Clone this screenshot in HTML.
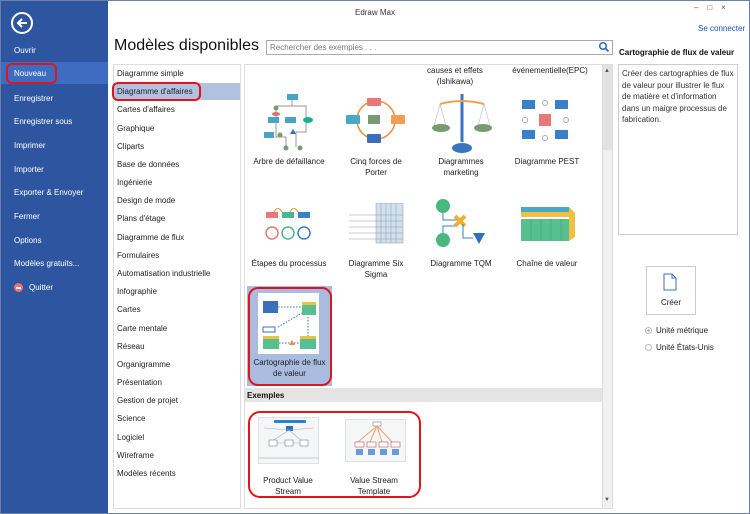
<!DOCTYPE html>
<html><head><meta charset="utf-8"><style>
*{margin:0;padding:0;box-sizing:border-box}
body{width:750px;height:514px;background:#fff;font-family:"Liberation Sans",sans-serif;font-size:8px;color:#222;position:relative;overflow:hidden}
.a{position:absolute}
#frame{left:0;top:0;width:750px;height:514px;border:1px solid #6b7fa8}
#side{left:1px;top:1px;width:107px;height:512px;background:#2e56a0}
.si{position:absolute;left:14px;color:#fff;font-size:8px}
.cat{position:absolute;left:117px;font-size:8px;color:#222}
.lbl{position:absolute;text-align:center;font-size:8px;color:#222;line-height:11px}
.red{position:absolute;border:2px solid #e0141c;border-radius:6px}
</style></head><body>
<div class="a" id="side"></div>
<div class="a" style="left:11px;top:12px;width:22px;height:22px;border:2px solid #fff;border-radius:50%"></div>
<svg class="a" style="left:15px;top:16px" width="14" height="14"><path d="M12 7H3M7 3L3 7L7 11" stroke="#fff" stroke-width="2" fill="none"/></svg>
<div class="a" style="left:1px;top:62px;width:107px;height:22px;background:#3d6cc0"></div>
<div class="si" style="top:46px">Ouvrir</div>
<div class="si" style="top:69px">Nouveau</div>
<div class="red" style="left:6px;top:63px;width:51px;height:21px"></div>
<div class="si" style="top:94px">Enregistrer</div>
<div class="si" style="top:117px">Enregistrer sous</div>
<div class="si" style="top:141px">Imprimer</div>
<div class="si" style="top:165px">Importer</div>
<div class="si" style="top:188px">Exporter &amp; Envoyer</div>
<div class="si" style="top:212px">Fermer</div>
<div class="si" style="top:236px">Options</div>
<div class="si" style="top:259px">Modèles gratuits...</div>
<div class="a" style="left:14px;top:283px;width:9px;height:9px;border-radius:50%;background:#f0707a"></div>
<div class="a" style="left:16px;top:287px;width:5px;height:1.5px;background:#fff"></div>
<div class="si" style="top:283px;left:29px">Quitter</div>

<div class="a" style="left:0;top:8px;width:750px;text-align:center;font-size:8px;color:#333">Edraw Max</div>
<div class="a" style="left:694px;top:3px;font-size:8px;color:#555">‒&nbsp;&nbsp;&nbsp;&nbsp;□&nbsp;&nbsp;&nbsp;&nbsp;×</div>
<div class="a" style="left:698px;top:24px;font-size:8px;color:#1a4fc0">Se connecter</div>
<div class="a" style="left:114px;top:37px;font-size:16px;color:#111">Modèles disponibles</div>
<div class="a" style="left:266px;top:40px;width:347px;height:15px;border:1px solid #aaa"></div>
<div class="a" style="left:270px;top:43px;font-size:8px;color:#777">Rechercher des exemples . . .</div>
<svg class="a" style="left:598px;top:41px" width="12" height="12"><circle cx="5" cy="5" r="3.3" stroke="#2a6ac0" stroke-width="1.5" fill="none"/><path d="M7.5 7.5L10.5 10.5" stroke="#2a6ac0" stroke-width="1.8"/></svg>

<div class="a" style="left:113px;top:64px;width:128px;height:445px;border:1px solid #ddd"></div>
<div class="a" style="left:114px;top:83px;width:126px;height:17px;background:#b1c1e0"></div>
<div class="red" style="left:112px;top:82px;width:89px;height:19px"></div>
<div class="cat" style="top:69px">Diagramme simple</div>
<div class="cat" style="top:87px">Diagramme d'affaires</div>
<div class="cat" style="top:105px">Cartes d'affaires</div>
<div class="cat" style="top:124px">Graphique</div>
<div class="cat" style="top:142px">Cliparts</div>
<div class="cat" style="top:160px">Base de données</div>
<div class="cat" style="top:178px">Ingénierie</div>
<div class="cat" style="top:196px">Design de mode</div>
<div class="cat" style="top:214px">Plans d'étage</div>
<div class="cat" style="top:233px">Diagramme de flux</div>
<div class="cat" style="top:251px">Formulaires</div>
<div class="cat" style="top:269px">Automatisation industrielle</div>
<div class="cat" style="top:287px">Infographie</div>
<div class="cat" style="top:305px">Cartes</div>
<div class="cat" style="top:324px">Carte mentale</div>
<div class="cat" style="top:342px">Réseau</div>
<div class="cat" style="top:360px">Organigramme</div>
<div class="cat" style="top:378px">Présentation</div>
<div class="cat" style="top:396px">Gestion de projet</div>
<div class="cat" style="top:414px">Science</div>
<div class="cat" style="top:433px">Logiciel</div>
<div class="cat" style="top:451px">Wireframe</div>
<div class="cat" style="top:469px">Modèles récents</div>

<div class="a" style="left:244px;top:64px;width:369px;height:445px;border:1px solid #ddd"></div>
<div class="a" style="left:602px;top:65px;width:10px;height:443px;background:#f0f0f0;border-left:1px solid #ddd"></div>
<div class="a" style="left:603px;top:65px;width:9px;height:85px;background:#e2e2e2"></div>
<div class="a" style="left:604px;top:68px;font-size:6px;color:#555">▲</div>
<div class="a" style="left:604px;top:497px;font-size:6px;color:#555">▼</div>

<div class="lbl" style="left:415px;top:65px;width:80px">causes et effets<br>(Ishikawa)</div>
<div class="lbl" style="left:500px;top:65px;width:100px">événementielle(EPC)</div>

<!-- icons row1 -->
<svg class="a" style="left:262px;top:92px" width="60" height="62"><rect x="25" y="2" width="11" height="6" fill="#4aa3c8"/><path d="M30 8V14H14V30M30 14H44V40H34V55M14 30V45H24V55" stroke="#999" fill="none"/><circle cx="14" cy="16" r="2.5" fill="#7a9a70"/><rect x="6" y="25" width="11" height="6" fill="#4aa3c8"/><rect x="23" y="25" width="11" height="6" fill="#4aa3c8"/><ellipse cx="46" cy="28" rx="5" ry="3" fill="#1ab08a"/><rect x="2" y="40" width="10" height="6" fill="#4aa3c8"/><circle cx="18" cy="43" r="2.5" fill="#7a9a70"/><circle cx="24" cy="56" r="2.5" fill="#7a9a70"/><circle cx="38" cy="56" r="2.5" fill="#7a9a70"/><path d="M31 37l3 5h-6z" fill="#2a70c0"/><ellipse cx="14" cy="22" rx="4" ry="2" fill="#e07070"/></svg>
<svg class="a" style="left:345px;top:96px" width="62" height="48"><circle cx="31" cy="24" r="19" stroke="#e8903a" stroke-width="1.5" fill="none"/><rect x="22" y="2" width="14" height="8" rx="1" fill="#e87878"/><rect x="1" y="19" width="14" height="9" rx="1" fill="#48a8c8"/><rect x="46" y="19" width="14" height="9" rx="1" fill="#f0a050"/><rect x="22" y="38" width="14" height="9" rx="1" fill="#3a70b8"/><rect x="23" y="19" width="12" height="9" fill="#789a70"/></svg>
<svg class="a" style="left:432px;top:92px" width="60" height="62"><path d="M30 2V50" stroke="#3a74c0" stroke-width="3"/><ellipse cx="30" cy="56" rx="10" ry="5" fill="#3a74c0"/><path d="M8 12Q30 6 52 12" stroke="#f0a050" stroke-width="2" fill="none"/><path d="M8 12L2 34M8 12L14 34M52 12L46 34M52 12L58 34" stroke="#aaa" stroke-width=".5"/><ellipse cx="9" cy="36" rx="9" ry="4" fill="#7a9a70"/><ellipse cx="51" cy="36" rx="9" ry="4" fill="#7a9a70"/></svg>
<svg class="a" style="left:522px;top:100px" width="50" height="45"><rect x="0" y="0" width="13" height="9" fill="#3a80c8"/><rect x="33" y="0" width="13" height="9" fill="#3a80c8"/><rect x="0" y="30" width="13" height="9" fill="#3a80c8"/><rect x="33" y="30" width="13" height="9" fill="#3a80c8"/><rect x="17" y="14" width="12" height="12" fill="#e87878"/><circle cx="23" cy="3" r="2.5" fill="none" stroke="#aaa"/><circle cx="23" cy="38" r="2.5" fill="none" stroke="#aaa"/><circle cx="3" cy="20" r="2.5" fill="none" stroke="#aaa"/><circle cx="44" cy="20" r="2.5" fill="none" stroke="#aaa"/></svg>
<div class="lbl" style="left:248px;top:156px;width:82px">Arbre de défaillance</div>
<div class="lbl" style="left:335px;top:156px;width:82px">Cinq forces de<br>Porter</div>
<div class="lbl" style="left:420px;top:156px;width:82px">Diagrammes<br>marketing</div>
<div class="lbl" style="left:506px;top:156px;width:82px">Diagramme PEST</div>

<!-- row 2 -->
<svg class="a" style="left:264px;top:205px" width="50" height="36"><rect x="2" y="7" width="12" height="6" fill="#e87878"/><rect x="18" y="7" width="12" height="6" fill="#48b890"/><rect x="34" y="7" width="12" height="6" fill="#3a80c8"/><path d="M10 7Q14 0 18 7M26 7Q30 0 34 7" stroke="#e8903a" fill="none"/><circle cx="8" cy="28" r="6" stroke="#e87878" stroke-width="1.5" fill="none"/><circle cx="24" cy="28" r="6" stroke="#48b890" stroke-width="1.5" fill="none"/><circle cx="40" cy="28" r="6" stroke="#3a80c8" stroke-width="1.5" fill="none"/></svg>
<svg class="a" style="left:349px;top:203px" width="55" height="42"><rect x="27" y="0" width="27" height="40" fill="#cfe0ef" stroke="#999" stroke-width=".5"/><path d="M0 12H54M0 18H54M0 24H54M0 30H54M0 36H54M32 0V40M37 0V40M42 0V40M47 0V40" stroke="#999" stroke-width=".5"/></svg>
<svg class="a" style="left:435px;top:198px" width="52" height="50"><circle cx="8" cy="8" r="7" fill="#48b880"/><circle cx="8" cy="42" r="7" fill="#48b880"/><path d="M8 15V22H22M8 35V28H22" stroke="#3a80c8" fill="none"/><path d="M20 18L30 28M30 18L20 28" stroke="#f0b030" stroke-width="4"/><path d="M28 26V40H38" stroke="#3a80c8" fill="none"/><path d="M38 35H50L44 46Z" fill="#2a70c0"/></svg>
<svg class="a" style="left:521px;top:207px" width="54" height="36"><rect x="0" y="0" width="48" height="5" fill="#48a8c8"/><rect x="0" y="5" width="48" height="5" fill="#f0c040"/><rect x="0" y="12" width="48" height="22" fill="#58c090"/><path d="M48 0L54 6V30L48 34Z" fill="#f0c040"/><path d="M10 12V34M20 12V34M30 12V34M40 12V34" stroke="#3a9a70" stroke-width=".5"/></svg>
<div class="lbl" style="left:248px;top:258px;width:82px">Étapes du processus</div>
<div class="lbl" style="left:335px;top:258px;width:82px">Diagramme Six<br>Sigma</div>
<div class="lbl" style="left:420px;top:258px;width:82px">Diagramme TQM</div>
<div class="lbl" style="left:506px;top:258px;width:82px">Chaîne de valeur</div>

<!-- selected -->
<div class="a" style="left:247px;top:286px;width:85px;height:100px;background:#a9bcdf"></div>
<div class="a" style="left:258px;top:293px;width:61px;height:61px;background:#fff"></div>
<svg class="a" style="left:262px;top:297px" width="54" height="52"><rect x="1" y="4" width="15" height="12" fill="#3a70b8"/><rect x="1" y="30" width="12" height="5" fill="#fff" stroke="#3a70b8"/><rect x="40" y="8" width="15" height="10" fill="#58c090"/><rect x="40" y="5" width="15" height="3" fill="#f0c040"/><rect x="1" y="42" width="16" height="10" fill="#58c090"/><rect x="1" y="39" width="16" height="3" fill="#f0c040"/><rect x="38" y="42" width="16" height="10" fill="#58c090"/><rect x="38" y="39" width="16" height="3" fill="#f0c040"/><path d="M16 10H40M16 30L40 16M46 20V39M17 46H38" stroke="#3a70b8" stroke-dasharray="1.5 1.5" fill="none"/><path d="M27 48l3-5 3 5z" fill="#e8903a"/></svg>
<div class="lbl" style="left:247px;top:357px;width:85px">Cartographie de flux<br>de valeur</div>
<div class="red" style="left:248px;top:287px;width:84px;height:99px;border-radius:10px"></div>

<div class="a" style="left:245px;top:388px;width:357px;height:14px;background:#e4e4e4"></div>
<div class="a" style="left:247px;top:391px;font-size:8px;font-weight:bold;color:#111">Exemples</div>
<div class="a" style="left:258px;top:417px;width:61px;height:47px;background:#f4f6f8;border:1px solid #e0e0e0"></div>
<svg class="a" style="left:259px;top:418px" width="60" height="45"><rect x="15" y="2" width="32" height="3" rx="1" fill="#2a80d0"/><rect x="27" y="8" width="7" height="5" fill="#2a70c0"/><path d="M5 10L30 12L55 10M10 25L30 12L45 25M10 25H45" stroke="#aab" stroke-width=".6" fill="none"/><rect x="10" y="22" width="8" height="6" fill="#fff" stroke="#667" stroke-width=".5"/><rect x="26" y="22" width="8" height="6" fill="#fff" stroke="#667" stroke-width=".5"/><rect x="41" y="22" width="8" height="6" fill="#fff" stroke="#667" stroke-width=".5"/><path d="M0 40H60" stroke="#999" stroke-width=".5"/></svg>
<div class="a" style="left:345px;top:419px;width:61px;height:43px;background:#f4f6f8;border:1px solid #e0e0e0"></div>
<svg class="a" style="left:346px;top:420px" width="60" height="42"><rect x="27" y="2" width="8" height="4" fill="#fff" stroke="#667" stroke-width=".5"/><path d="M31 6L12 22M31 6L24 22M31 6L36 22M31 6L46 22" stroke="#f0a070" stroke-width="1"/><rect x="9" y="22" width="9" height="5" fill="#fff" stroke="#a33" stroke-width=".5"/><rect x="21" y="22" width="9" height="5" fill="#fff" stroke="#a33" stroke-width=".5"/><rect x="33" y="22" width="9" height="5" fill="#fff" stroke="#a33" stroke-width=".5"/><rect x="45" y="22" width="9" height="5" fill="#fff" stroke="#a33" stroke-width=".5"/><rect x="10" y="29" width="7" height="6" fill="#6a9ad8"/><rect x="22" y="29" width="7" height="6" fill="#6a9ad8"/><rect x="34" y="29" width="7" height="6" fill="#6a9ad8"/><rect x="46" y="29" width="7" height="6" fill="#6a9ad8"/></svg>
<div class="lbl" style="left:248px;top:475px;width:80px">Product Value<br>Stream</div>
<div class="lbl" style="left:334px;top:475px;width:80px">Value Stream<br>Template</div>
<div class="red" style="left:248px;top:411px;width:173px;height:87px;border-radius:12px"></div>

<!-- right panel -->
<div class="a" style="left:619px;top:48px;font-size:8px;font-weight:bold;color:#111">Cartographie de flux de valeur</div>
<div class="a" style="left:618px;top:64px;width:120px;height:171px;border:1px solid #ccc"></div>
<div class="a" style="left:622px;top:68px;width:112px;font-size:8px;line-height:11.5px;color:#333">Créer des cartographies de flux de valeur pour illustrer le flux de matière et d'information dans un maigre processus de fabrication.</div>
<div class="a" style="left:646px;top:266px;width:50px;height:49px;border:1px solid #ccc"></div>
<svg class="a" style="left:663px;top:273px" width="14" height="18"><path d="M1 1H9L13 5V17H1Z" stroke="#3a70b8" fill="none"/><path d="M9 1V5H13" stroke="#3a70b8" fill="none"/></svg>
<div class="a" style="left:646px;top:298px;width:50px;text-align:center;font-size:8px">Créer</div>
<div class="a" style="left:645px;top:327px;width:7px;height:7px;border-radius:50%;border:1px solid #bbb;background:radial-gradient(#aaa 30%,#fff 40%)"></div>
<div class="a" style="left:656px;top:326px;font-size:8px">Unité métrique</div>
<div class="a" style="left:645px;top:344px;width:7px;height:7px;border-radius:50%;border:1px solid #bbb"></div>
<div class="a" style="left:656px;top:343px;font-size:8px">Unité États-Unis</div>
<div class="a" id="frame"></div>
</body></html>
